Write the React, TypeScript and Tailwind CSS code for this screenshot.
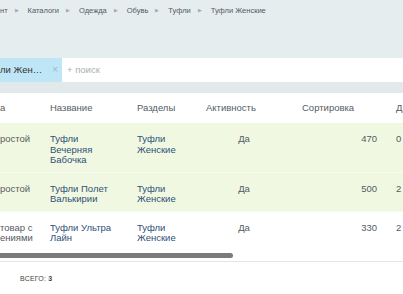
import React from 'react';

// Breadcrumb trail (scrolled, first item clipped)
const crumbs = ['нт', 'Каталоги', 'Одежда', 'Обувь', 'Туфли', 'Туфли Женские'];

// Rows of the element list
const rows = [
  { type: ['ростой'], name: ['Туфли', 'Вечерняя', 'Бабочка'], section: ['Туфли', 'Женские'], active: 'Да', sort: 470, last: '0', green: true },
  { type: ['ростой'], name: ['Туфли Полет', 'Валькирии'], section: ['Туфли', 'Женские'], active: 'Да', sort: 500, last: '2', green: true },
  { type: ['товар с', 'ениями'], name: ['Туфли Ультра', 'Лайн'], section: ['Туфли', 'Женские'], active: 'Да', sort: 330, last: '2', green: false },
];

const cols = 'grid grid-cols-[40px_87px_69px_96px_94px_40px]';

const App: React.FC = () => {
  return (
    <div
      className="w-[403px] h-[294px] overflow-hidden bg-white text-[9.5px] leading-[10.5px] text-[#555b61]"
      style={{ fontFamily: '"Liberation Sans", Arial, sans-serif' }}
    >
      {/* Top panel */}
      <div className="bg-[#e6edef]">
        {/* Breadcrumbs */}
        <div className="h-[23px] flex items-center text-[7.5px] text-[#525a62] whitespace-nowrap">
          {crumbs.map((c, i) => (
            <React.Fragment key={i}>
              {i > 0 && (
                <span className="ml-[7px] mr-[9px] text-[4.5px] text-[#a3acb0]">▶</span>
              )}
              <span>{c}</span>
            </React.Fragment>
          ))}
        </div>

        {/* Filter */}
        <div className="mt-[35px] h-[24px] bg-white flex items-center">
          <div className="h-full w-[62px] bg-[#bfe6f6] flex items-center justify-between pr-[4px] text-[9.5px] text-[#333]">
            <span>ли Жен…</span>
            <span className="text-[#9fb8c2] text-[10px]">×</span>
          </div>
          <span className="ml-[5px] text-[9.5px] text-[#a9b0b4]">+ поиск</span>
        </div>
        <div className="h-[11px] bg-[#e2e9eb]" />
      </div>

      {/* Table */}
      <div className="overflow-hidden">
        <div className={`${cols} h-[30px] items-center bg-white text-[#545c64]`}>
          <div>а</div>
          <div className="pl-[10px]">Название</div>
          <div className="pl-[10px]">Разделы</div>
          <div className="pl-[10px]">Активность</div>
          <div className="pl-[10px]">Сортировка</div>
          <div className="pl-[10px]">Д</div>
        </div>

        {rows.map((r, i) => (
          <div
            key={i}
            className={`${cols} pt-[11px] pb-[6px] ${r.green ? 'bg-[#f1f8e2] border-b border-[#f8fbf2]' : 'bg-white'}`}
          >
            <div>
              {r.type.map((t, j) => (
                <div key={j}>{t}</div>
              ))}
            </div>
            <div className="pl-[10px] text-[#2f5078]">
              {r.name.map((t, j) => (
                <div key={j}>{t}</div>
              ))}
            </div>
            <div className="pl-[10px] text-[#2f5078]">
              {r.section.map((t, j) => (
                <div key={j}>{t}</div>
              ))}
            </div>
            <div className="text-center">{r.active}</div>
            <div className="text-right pr-[9px]">{r.sort}</div>
            <div className="pl-[10px]">{r.last}</div>
          </div>
        ))}

        {/* Horizontal scrollbar */}
        <div className="h-[12px] pt-[3px] border-b border-[#dfe6ee]">
          <div className="h-[5px] w-[233px] rounded-r-full bg-[#7b7b7b]" />
        </div>
      </div>

      {/* Footer */}
      <div className="pl-[20px] pt-[12px] text-[7px] text-[#444] tracking-[0.2px]">
        ВСЕГО: <span className="font-bold">3</span>
      </div>
    </div>
  );
};

export default App;
